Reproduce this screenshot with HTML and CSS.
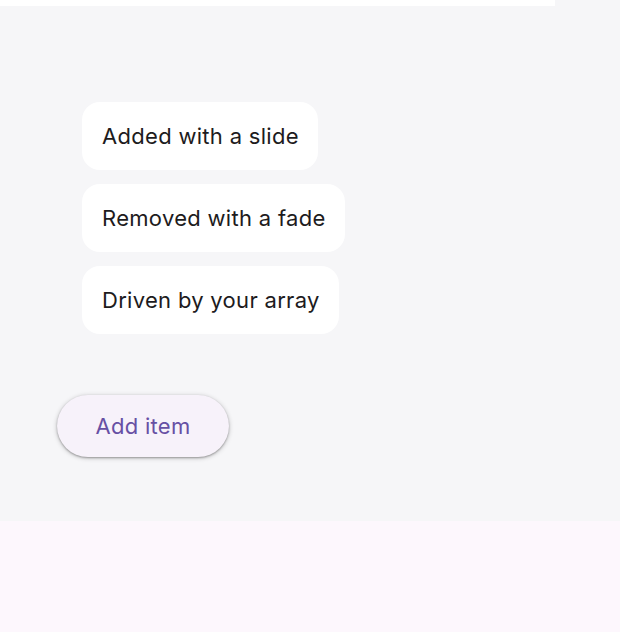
FILE: index.html
```html
<!DOCTYPE html>
<html lang="en">
<head>
    <meta charset="UTF-8">
    <meta name="viewport" content="width=device-width, initial-scale=1.0">
    <title>Animated list</title>
    <link rel="stylesheet" href="styles.css">
</head>
<body>
    <div class="demo">
        <div class="top-strip"></div>
        <ul class="item-list">
            <li class="item">Added with a slide</li>
            <li class="item">Removed with a fade</li>
            <li class="item">Driven by your array</li>
        </ul>
        <button class="add-btn" type="button">Add item</button>
    </div>
    <div class="footer-area"></div>
</body>
</html>
```

FILE: styles.css
```css
html, body { margin: 0; padding: 0; }
body { font-family: Inter, "Noto Sans", sans-serif; background: #fdf7fd; }

.demo { background: #f6f6f8; height: 521px; box-sizing: border-box; }
.top-strip { width: 555px; height: 6px; background: #ffffff; }

.item-list { list-style: none; margin: 96px 0 0 82px; padding: 0; display: flex; flex-direction: column; align-items: flex-start; gap: 14px; }
.item {
    background: #ffffff;
    border-radius: 18px;
    height: 68px;
    padding: 0 19px 0 20px;
    display: flex;
    align-items: center;
    font-size: 22px;
    letter-spacing: 0.3px;
    color: #1d1b20;
}

.add-btn {
    margin: 61px 0 0 57px;
    height: 62px;
    width: 172px;
    border: none;
    border-radius: 31px;
    background: #f7f2fa;
    color: #6750a4;
    font-family: inherit;
    font-size: 22px;
    letter-spacing: 0.3px;
    box-shadow: 0 1px 2px rgba(0,0,0,0.3), 0 1px 4px 1px rgba(0,0,0,0.15);
    cursor: pointer;
}
```
